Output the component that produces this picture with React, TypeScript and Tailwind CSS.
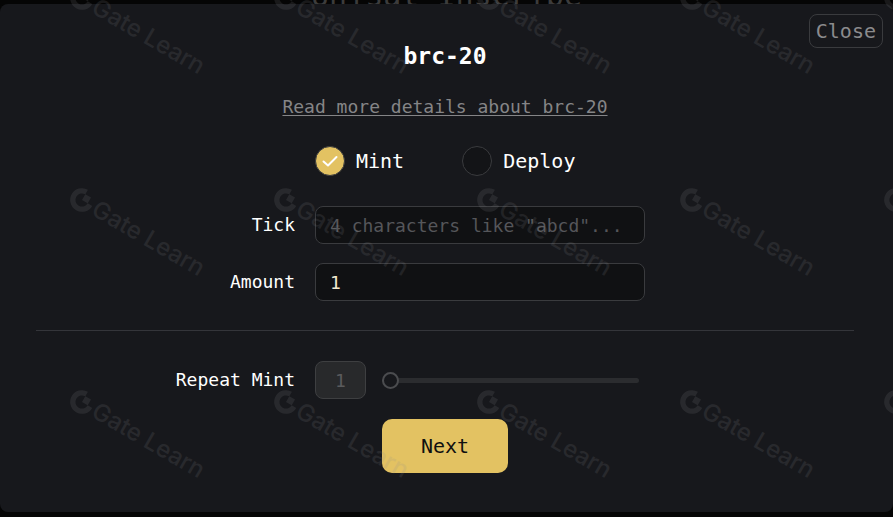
import { useState } from "react";

const modes = ["Mint", "Deploy"];

const watermarkColumns = [-121, 82, 286, 489, 692, 896];
const watermarkRows = [-2, 200, 402];

const Watermark = () => (
  <svg
    aria-hidden="true"
    className="pointer-events-none absolute inset-0 h-full w-full fill-[#8c8d90] opacity-[0.15]"
  >
    {watermarkRows.map((y) =>
      watermarkColumns.map((x) => (
        <g key={`${x}-${y}`} transform={`translate(${x} ${y}) rotate(30)`}>
          <path d="M0 -11.8 A11.8 11.8 0 1 0 11.8 0 H6.6 A6.6 6.6 0 1 1 0 -6.6 Z" />
          <path d="M0 -6.6 H6.6 V0 H0 Z" />
          <text x="14" y="8" className="font-['Inter',sans-serif] text-[24px] font-medium">
            Gate Learn
          </text>
        </g>
      ))
    )}
  </svg>
);

const App = () => {
  const [mode, setMode] = useState("Mint");
  const [tick, setTick] = useState("");
  const [amount, setAmount] = useState("1");
  const [repeat, setRepeat] = useState(1);

  const rowClass = "grid grid-cols-[259fr_330fr_189fr] items-center gap-x-5";
  const labelClass = "text-right text-[18px] leading-6 whitespace-nowrap";
  const inputClass =
    "h-[38px] w-full rounded-lg border border-[#3a3b3e] bg-[#101113] px-3.5 text-[18px] outline-none placeholder:text-[#55565a]";

  return (
    <div className="relative min-h-screen overflow-hidden bg-[#050505] font-['DejaVu_Sans_Mono',monospace] text-white">
      <header className="flex h-1 items-end justify-center overflow-hidden">
        <p className="text-[30px] leading-4 whitespace-nowrap text-[#3c3c3c]">Unisat Inscribe</p>
      </header>

      <main className="relative rounded-lg bg-[#17181c] pt-9 pr-[39px] pb-[39px] pl-9">
        <button
          type="button"
          className="absolute top-2.5 right-2.5 h-[34px] rounded-lg border border-[#3a3b3e] px-1.5 text-[20px] leading-6 text-[#8b8b8d]"
        >
          Close
        </button>

        <h1 className="text-center text-[23px] leading-8 font-bold">brc-20</h1>

        <p className="mt-[23px] text-center text-[18px] leading-6">
          <a href="#details" className="text-[#858587] underline underline-offset-2">
            Read more details about brc-20
          </a>
        </p>

        <form onSubmit={(e) => e.preventDefault()}>
          <div className={`${rowClass} mt-[27px]`}>
            <div className="col-start-2 flex gap-[58px]">
              {modes.map((item) => (
                <label key={item} className="flex items-center gap-[11px] text-[20px] leading-6">
                  <span className="grid h-[30px] w-[30px] place-items-center">
                    <input
                      type="radio"
                      name="mode"
                      value={item}
                      checked={mode === item}
                      onChange={() => setMode(item)}
                      className="col-start-1 row-start-1 h-[30px] w-[30px] appearance-none rounded-full border border-[#3a3b3e] bg-[#131417] checked:bg-[#e3c262]"
                    />
                    {mode === item && (
                      <svg
                        viewBox="0 0 30 30"
                        className="pointer-events-none relative col-start-1 row-start-1 h-[30px] w-[30px] fill-none stroke-white stroke-2"
                      >
                        <path d="M8.5 15.5 L13 19.5 L21.5 11" strokeLinecap="round" strokeLinejoin="round" />
                      </svg>
                    )}
                  </span>
                  {item}
                </label>
              ))}
            </div>
          </div>

          <div className={`${rowClass} mt-[30px]`}>
            <label htmlFor="tick" className={labelClass}>Tick</label>
            <input
              id="tick"
              type="text"
              placeholder={'4 characters like "abcd"...'}
              value={tick}
              onChange={(e) => setTick(e.target.value)}
              className={inputClass}
            />
          </div>

          <div className={`${rowClass} mt-[19px]`}>
            <label htmlFor="amount" className={labelClass}>Amount</label>
            <input
              id="amount"
              type="text"
              value={amount}
              onChange={(e) => setAmount(e.target.value)}
              className={`${inputClass} text-[#f3ead0]`}
            />
          </div>

          <hr className="mt-[29px] border-[#34353a]" />

          <div className={`${rowClass} mt-[30px]`}>
            <label htmlFor="repeat" className={labelClass}>Repeat Mint</label>
            <div className="flex items-center gap-4">
              <input
                type="text"
                aria-label="Repeat count"
                value={repeat}
                disabled
                className="h-[38px] w-[51px] rounded-lg border border-[#3e3f41] bg-[#28292b] text-center text-[18px] text-[#5a5b5d]"
              />
              <input
                id="repeat"
                type="range"
                min="1"
                max="100"
                value={repeat}
                onChange={(e) => setRepeat(Number(e.target.value))}
                className="mr-1.5 h-[18px] min-w-0 flex-1 appearance-none bg-transparent [&::-webkit-slider-runnable-track]:h-[5px] [&::-webkit-slider-runnable-track]:rounded-full [&::-webkit-slider-runnable-track]:bg-[#2b2c2f] [&::-webkit-slider-thumb]:-mt-1.5 [&::-webkit-slider-thumb]:h-[17px] [&::-webkit-slider-thumb]:w-[17px] [&::-webkit-slider-thumb]:appearance-none [&::-webkit-slider-thumb]:rounded-full [&::-webkit-slider-thumb]:border-2 [&::-webkit-slider-thumb]:border-[#4b4c4f] [&::-webkit-slider-thumb]:bg-[#17181c]"
              />
            </div>
          </div>

          <div className="mt-5 flex justify-center">
            <button
              type="submit"
              className="h-[54px] w-[126px] rounded-[10px] bg-[#e3c262] text-[20px] leading-6 text-[#101010]"
            >
              Next
            </button>
          </div>
        </form>
      </main>

      <Watermark />
    </div>
  );
};

export default App;
